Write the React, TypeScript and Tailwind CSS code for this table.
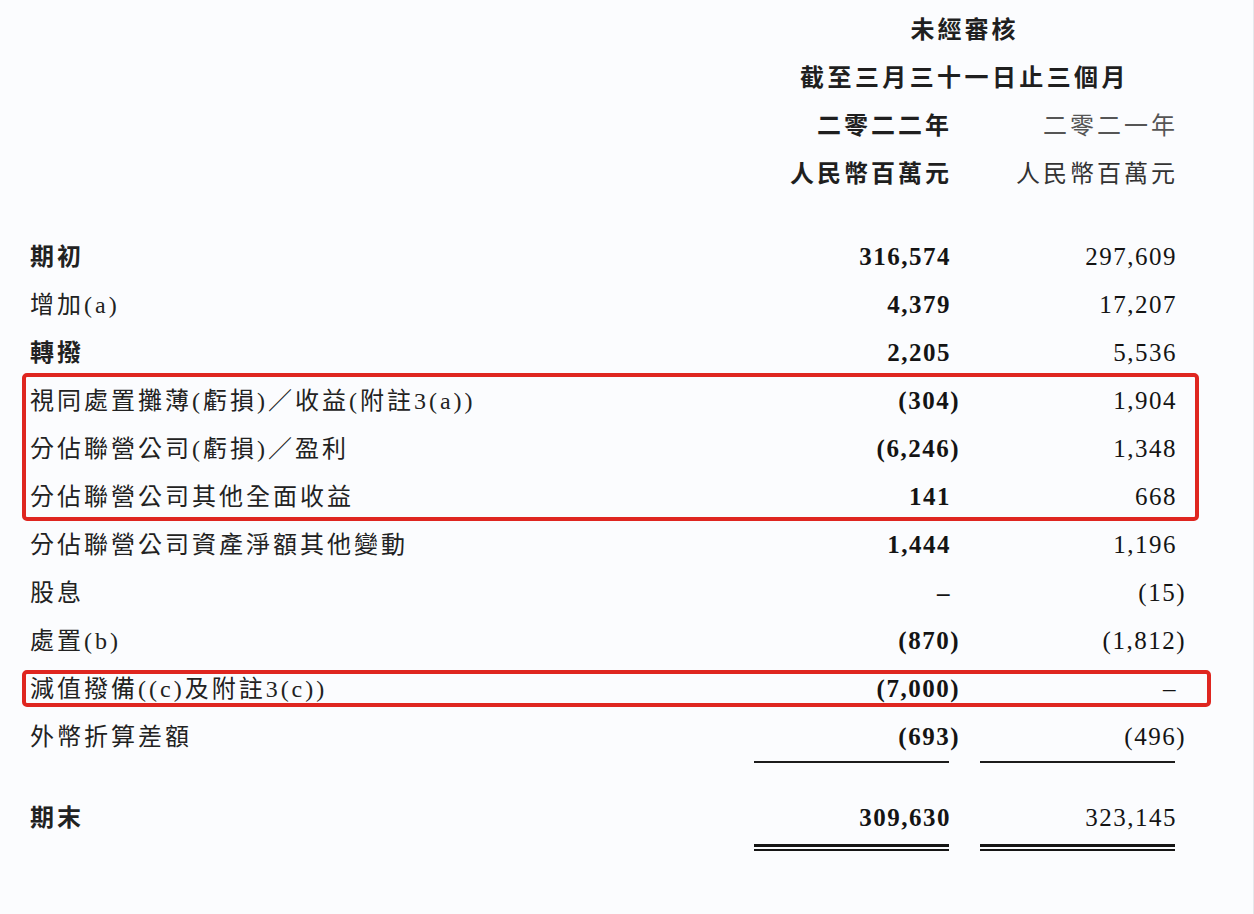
const cjk = "font-['Liberation_Serif','Noto_Sans_CJK_TC',serif]";
const num = "font-['Liberation_Serif',serif] text-[25px] tracking-[1.5px] text-[#141414]";

type RowData = { label: string; a: string; b: string; strong?: boolean };

// Figures in brackets keep their digits on the column edge; the closing
// bracket hangs into the gutter, as in the printed report.
function Figure({ value }: { value: string }) {
  if (value.startsWith("(")) {
    return (
      <>
        {value.slice(0, -1)}
        <span className="mr-[-11px]">)</span>
      </>
    );
  }
  return <span className="mr-[-2px]">{value}</span>;
}

function Row({ label, a, b, strong }: RowData) {
  return (
    <div className="grid h-[48px] grid-cols-[1fr_195px_195px] items-center gap-x-[31px] pl-[30px] pr-[78px]">
      <div
        className={`${cjk} whitespace-nowrap text-[24px] tracking-[3px] text-[#222] ${
          strong ? "font-bold" : "font-normal"
        }`}
      >
        {label}
      </div>
      <div className={`${num} text-right font-bold`}>
        <Figure value={a} />
      </div>
      <div className={`${num} text-right font-normal`}>
        <Figure value={b} />
      </div>
    </div>
  );
}

function Rules({ double }: { double?: boolean }) {
  const cell = double ? (
    <div className="flex flex-col gap-[2px]">
      <div className="h-[3px] bg-[#151515]" />
      <div className="h-[2px] bg-[#151515]" />
    </div>
  ) : (
    <div className="h-[2px] bg-[#1c1c1c]" />
  );
  return (
    <div className="grid grid-cols-[1fr_195px_195px] gap-x-[31px] pl-[30px] pr-[78px]">
      <div />
      {cell}
      {cell}
    </div>
  );
}

const top: RowData[] = [
  { label: "期初", a: "316,574", b: "297,609", strong: true },
  { label: "增加(a)", a: "4,379", b: "17,207" },
  { label: "轉撥", a: "2,205", b: "5,536", strong: true },
];

const boxed: RowData[] = [
  { label: "視同處置攤薄(虧損)／收益(附註3(a))", a: "(304)", b: "1,904" },
  { label: "分佔聯營公司(虧損)／盈利", a: "(6,246)", b: "1,348" },
  { label: "分佔聯營公司其他全面收益", a: "141", b: "668" },
];

const middle: RowData[] = [
  { label: "分佔聯營公司資產淨額其他變動", a: "1,444", b: "1,196" },
  { label: "股息", a: "–", b: "(15)" },
  { label: "處置(b)", a: "(870)", b: "(1,812)" },
];

export default function App() {
  return (
    <div className="min-h-[914px] w-full border-r border-[#e6e8ec] bg-[#fbfcfe] pt-[6px]">
      {/* column heads */}
      <div className="grid grid-cols-[1fr_195px_195px] grid-rows-[48px_48px_48px_48px] items-center gap-x-[31px] pl-[30px] pr-[78px] text-[24px] text-[#1f1f1f]">
        <div className="row-span-4" />
        <div className={`${cjk} col-span-2 text-center font-semibold tracking-[3px]`}>未經審核</div>
        <div className={`${cjk} col-span-2 whitespace-nowrap text-center font-semibold tracking-[3.4px]`}>
          截至三月三十一日止三個月
        </div>
        <div className={`${cjk} mr-[-3px] text-right font-semibold tracking-[3px]`}>二零二二年</div>
        <div className={`${cjk} mr-[-3px] text-right font-normal tracking-[3px] text-[#555]`}>二零二一年</div>
        <div className={`${cjk} mr-[-3px] text-right font-semibold tracking-[3px]`}>人民幣百萬元</div>
        <div className={`${cjk} mr-[-3px] text-right font-normal tracking-[3px] text-[#333]`}>人民幣百萬元</div>
      </div>

      <div className="mt-[35px]">
        {top.map((r) => (
          <Row key={r.label} {...r} />
        ))}

        <div className="relative">
          {boxed.map((r) => (
            <Row key={r.label} {...r} />
          ))}
          <div className="pointer-events-none absolute -top-[4px] bottom-0 left-[22px] right-[54px] rounded-[5px] border-[4px] border-[#df2620]" />
        </div>

        {middle.map((r) => (
          <Row key={r.label} {...r} />
        ))}

        <div className="relative">
          <Row label="減值撥備((c)及附註3(c))" a="(7,000)" b="–" />
          <div className="pointer-events-none absolute top-[5px] bottom-[6px] left-[22px] right-[42px] rounded-[5px] border-[4px] border-[#df2620]" />
        </div>

        <Row label="外幣折算差額" a="(693)" b="(496)" />
      </div>

      <Rules />
      <div className="mt-[31px]">
        <Row label="期末" a="309,630" b="323,145" strong />
      </div>
      <div className="mt-[2px]">
        <Rules double />
      </div>
    </div>
  );
}
